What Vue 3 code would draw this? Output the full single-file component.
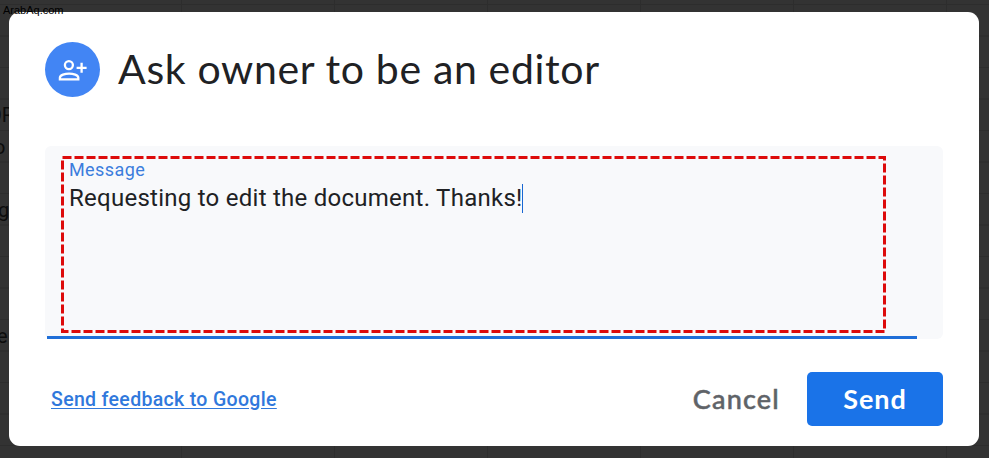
<script setup>
import { ref } from "vue";

const message = ref("Requesting to edit the document. Thanks!");

// spreadsheet lines behind the dialog
const rows = Array.from({ length: 15 }, (_, i) => 4.5 + i * 31.5);
const cols = Array.from({ length: 6 }, (_, i) => 181.5 + i * 153);
</script>

<template>
    <div class="page">
        <svg class="sheet" width="989" height="458">
            <line v-for="y in rows" :key="'r' + y" x1="0" x2="989" :y1="y" :y2="y" />
            <line v-for="x in cols" :key="'c' + x" :x1="x" :x2="x" y1="0" y2="458" />
            <text x="-12" y="122">OR</text>
            <text x="-6" y="154">o</text>
            <text x="-2" y="217">g</text>
            <text x="-3" y="343">e</text>
        </svg>
        <span class="watermark">ArabAq.com</span>
        <div class="dialog">
            <div class="header">
                <div class="avatar">
                    <svg width="32" height="32" viewBox="0 0 32 32">
                        <circle cx="11.9" cy="11.1" r="4" />
                        <path d="M2.9 25.4v-1.6c0-2.7 5.2-4.2 9.2-4.2s9.2 1.5 9.2 4.2v1.6z" />
                        <path d="M24.6 8.8v10M19.6 13.8h10" />
                    </svg>
                </div>
                <h1 class="title">Ask owner to be an editor</h1>
            </div>
            <div class="field">
                <label class="label">Message</label>
                <div class="message">{{ message }}<i class="caret"></i></div>
                <div class="underline"></div>
                <svg class="highlight" width="825" height="177">
                    <rect x="1.5" y="1.5" width="822" height="174" />
                </svg>
            </div>
            <div class="footer">
                <a class="feedback">Send feedback to Google</a>
                <button class="btn cancel">Cancel</button>
                <button class="btn send">Send</button>
            </div>
        </div>
    </div>
</template>

<style>
body {
    margin: 0;
    overflow: hidden;
}
</style>

<style scoped>
.page {
    position: relative;
    box-sizing: border-box;
    width: 989px;
    height: 458px;
    padding: 12px 10px 12px 8.5px;
    background-color: #333333;
    font-family: Roboto, "Liberation Sans", sans-serif;
}

.sheet {
    position: absolute;
    top: 0;
    left: 0;
}

.sheet line {
    stroke: #2d2d2d;
    stroke-width: 1;
}

.sheet text {
    font-size: 20px;
    fill: #0c0c0c;
}

.watermark {
    position: absolute;
    z-index: 2;
    top: 3px;
    left: 3px;
    font-family: "Liberation Sans", sans-serif;
    font-size: 11px;
    line-height: 14px;
    color: #000;
}

.dialog {
    position: relative;
    box-sizing: border-box;
    height: 434px;
    padding: 30px 36px 0 36.5px;
    border-radius: 11px;
    background-color: #fff;
}

.header {
    display: flex;
    align-items: center;
    height: 55px;
}

.avatar {
    display: flex;
    align-items: center;
    justify-content: center;
    width: 55px;
    height: 55px;
    border-radius: 50%;
    background-color: #4285f4;
}

.avatar svg {
    fill: none;
    stroke: #fff;
    stroke-width: 2.3;
}

.title {
    margin: 0 0 2px 18px;
    font-family: Lato, sans-serif;
    font-size: 41px;
    font-weight: 400;
    line-height: 53px;
    letter-spacing: 0.65px;
    white-space: nowrap;
    color: #202124;
}

.field {
    position: relative;
    box-sizing: border-box;
    height: 193px;
    margin-top: 49px;
    padding: 13px 24px 0;
    border-radius: 6px;
    background-color: #f8f9fb;
}

.label {
    display: block;
    font-size: 18px;
    line-height: 22px;
    letter-spacing: 0.4px;
    color: #3b7ddd;
}

.message {
    display: flex;
    align-items: center;
    height: 34px;
    font-size: 24px;
    letter-spacing: 0.26px;
    white-space: nowrap;
    color: #202124;
}

.caret {
    width: 1px;
    height: 29px;
    margin-left: -0.5px;
    background-color: #1967d2;
}

.underline {
    position: absolute;
    left: 2px;
    bottom: 0;
    width: 870px;
    height: 3px;
    background-color: #1f6fd8;
}

.highlight {
    position: absolute;
    top: 10px;
    left: 16px;
}

.highlight rect {
    fill: none;
    stroke: #dd0b0b;
    stroke-width: 3;
    stroke-dasharray: 9 3;
}

.footer {
    display: flex;
    align-items: center;
    height: 54px;
    margin-top: 33px;
}

.feedback {
    margin-left: 6px;
    margin-right: auto;
    font-size: 19.5px;
    font-weight: 500;
    letter-spacing: 0.33px;
    text-decoration: underline;
    text-underline-offset: 2px;
    color: #3078dc;
}

.btn {
    height: 54px;
    padding: 0 0 2px;
    border: none;
    border-radius: 5px;
    font-family: Lato, sans-serif;
    font-size: 27px;
    font-weight: 700;
    letter-spacing: 0.9px;
}

.cancel {
    margin-right: 27px;
    background: none;
    font-weight: 500;
    letter-spacing: 1.2px;
    -webkit-text-stroke: 0.5px #5f6368;
    color: #5f6368;
}

.send {
    width: 136px;
    background-color: #1a73e8;
    color: #fff;
}
</style>
